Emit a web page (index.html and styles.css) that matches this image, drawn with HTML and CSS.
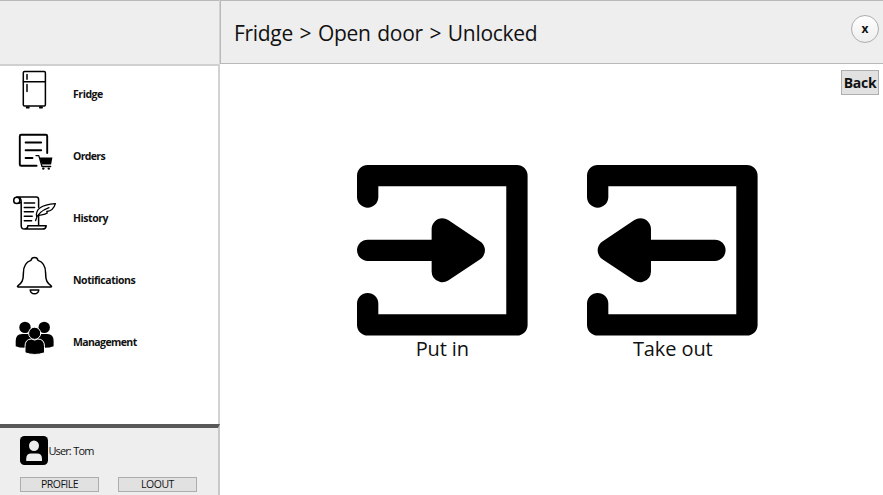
FILE: index.html
```html
<!DOCTYPE html>
<html lang="en">
<head>
<meta charset="utf-8">
<title>Fridge</title>
<link rel="stylesheet" href="styles.css">
</head>
<body>
<div class="app">
  <aside class="sidebar">
    <div class="brand"></div>
    <nav class="nav">
      <a class="item">
        <svg class="icon" viewBox="0 66 60 56">
          <rect x="23.3" y="71.6" width="22.1" height="34.4" rx="1.2"/>
          <path d="M23.3 81.8H45.4M27 74.5V79.3M27 84.6V91.4"/>
          <path class="thick" d="M27 107.4H28.5M40.2 107.4H41.7"/>
        </svg>
        <span class="label">Fridge</span>
      </a>
      <a class="item">
        <svg class="icon" viewBox="0 128 60 56">
          <path class="mid" d="M47.2 153V136.2Q47.2 134.8 45.8 134.8H21.2Q19.8 134.8 19.8 136.2V164.4Q19.8 165.8 21.2 165.8H36.6M25.6 142.5H41.2M25.6 150.3H41.2M25.6 158H32.5"/>
          <path class="fill" d="M39.5 157.6H52.4L51.1 164.6H41.8Z"/>
          <path class="thin" d="M36 155.6H38.8L42 166.5H50.7"/>
          <circle class="fill" cx="43.3" cy="168.6" r="1.2"/><circle class="fill" cx="48.8" cy="168.6" r="1.2"/>
        </svg>
        <span class="label orders">Orders</span>
      </a>
      <a class="item">
        <svg class="icon" viewBox="0 190 60 56">
          <circle cx="16.8" cy="200.4" r="3.1"/>
          <path d="M16.8 197.1H36.3Q38.6 197.1 38.6 199.5V207.3M38.6 215.5V225.5M17 197.1Q21.2 197.1 21.2 202V225.5Q21.2 229.1 24.5 229.1H42.6Q45.8 229 46.2 225.8H27.8Q27.8 229 24.5 229.1M18.5 203.2L21 202.5"/>
          <path d="M24.3 203H34.6M24.3 207.4H34.6M24.3 211.8H33.4M24.3 216.3H32.2M24.3 220.7H31.6"/>
          <path class="thin" d="M35.6 220.5C37 214 41 210.5 49 207.6M36.6 216.5C35.4 209 41 204.8 55.4 203.6C53.6 210 48.5 211.3 46.8 211.5L47.3 213C43.8 215.7 39.7 214 36.6 216.5"/>
        </svg>
        <span class="label">History</span>
      </a>
      <a class="item">
        <svg class="icon" viewBox="0 252 60 56">
          <path d="M31 260.4Q31.6 257.5 34.5 257.5T38 260.4C43.5 262.2 45.6 267 45.6 273C45.6 280.5 47 283 51.2 285.8Q52 287 50.7 287H18.3Q17 287 17.8 285.8C22 283 23.4 280.5 23.4 273C23.4 267 25.5 262.2 31 260.4Z"/>
          <path d="M30.2 290H38.8Q38.3 293.8 34.5 293.8T30.2 290Z"/>
        </svg>
        <span class="label">Notifications</span>
      </a>
      <a class="item">
        <svg class="icon" viewBox="0 314 60 56">
          <g class="fill">
            <circle cx="25" cy="327.4" r="5.7"/><circle cx="44.2" cy="327.4" r="5.7"/>
            <path d="M15.7 346.3V341Q15.7 334 22 334H47.3Q53.6 334 53.6 341V346.3Q50 347.8 44.5 347.8H24.8Q19.3 347.8 15.7 346.3Z"/>
          </g>
          <g class="cutout">
            <circle cx="34.7" cy="333.3" r="6.1"/>
            <path d="M25 352.8V346.5Q25 339 31.5 339Q34.7 341.2 37.9 339Q44.5 339 44.5 346.5V352.8Q34.7 356.2 25 352.8Z"/>
          </g>
        </svg>
        <span class="label management">Management</span>
      </a>
    </nav>
    <footer class="account">
      <div class="user">
        <svg class="avatar" viewBox="0 0 28 29">
          <rect width="28" height="29" rx="4.5"/>
          <ellipse cx="14" cy="9.8" rx="5" ry="5.3" fill="#eee"/>
          <path d="M6.2 25V22.8Q6.2 17.6 11.2 17.6H17Q22 17.6 22 22.8V25Z" fill="#eee"/>
        </svg>
        <span class="name">User: Tom</span>
      </div>
      <div class="actions">
        <button class="small">PROFILE</button>
        <button class="small">LOOUT</button>
      </div>
    </footer>
  </aside>
  <main class="main">
    <header class="top">
      <h1 class="crumbs">Fridge &gt; Open door &gt; Unlocked</h1>
      <button class="close">x</button>
    </header>
    <div class="toolbar"><button class="back">Back</button></div>
    <section class="choices">
      <div class="choice">
        <svg class="door" viewBox="0 0 16 16"><path d="M1 3V1H15V15H1V13M1 8H8"/><path class="solid" d="M8 6L11 8L8 10Z"/></svg>
        <span class="caption">Put in</span>
      </div>
      <div class="choice">
        <svg class="door" viewBox="0 0 16 16"><path d="M1 3V1H15V15H1V13M5 8H12"/><path class="solid" d="M5 6L2 8L5 10Z"/></svg>
        <span class="caption">Take out</span>
      </div>
    </section>
  </main>
</div>
</body>
</html>
```
FILE: styles.css
```css
* { box-sizing: border-box; }
body { margin: 0; background: #fff; color: #111; font-family: "Open Sans", "Noto Sans", sans-serif; }
.app { display: flex; width: 883px; height: 495px; overflow: hidden; }
.sidebar { display: flex; flex-direction: column; width: 220px; border-right: 2px solid #d2d2d2; }
.brand { height: 66px; flex: none; margin-right: -1px; background: #eee; border-top: 1px solid #b9b9b9; border-bottom: 2px solid #d0d0d0; }
.nav { flex: 1; }
.item { display: flex; align-items: center; height: 62px; padding-bottom: 6px; }
.icon { width: 60px; height: 56px; margin-right: 13px; flex: none; fill: none; stroke: #000; stroke-width: 1.5; stroke-linecap: round; stroke-linejoin: round; }
.thick { stroke-width: 2.4; }
.mid { stroke-width: 1.9; }
.thin { stroke-width: 1.3; }
.fill { fill: #000; stroke: none; }
.cutout { fill: #000; stroke: #fff; stroke-width: 1; }
.label { font-size: 10.5px; font-weight: 700; line-height: 16px; letter-spacing: -0.45px; white-space: nowrap; }
.orders { letter-spacing: -0.65px; }
.management { letter-spacing: -0.6px; }
.account { height: 71px; flex: none; margin-right: -2px; background: #eee; border-top: 4px solid #595959; border-right: 2px solid #c9c9c9; }
.user { display: flex; align-items: center; height: 29px; margin: 8px 0 0 20px; }
.avatar { width: 28px; height: 29px; }
.name { margin-left: 0.5px; font-size: 11px; letter-spacing: -0.9px; word-spacing: 0.5px; white-space: nowrap; }
.actions { display: flex; gap: 19px; margin: 12px 0 0 20px; }
button { margin: 0; padding: 0; font-family: inherit; color: #111; border: 1px solid #adadad; background: #e1e1e1; }
.small { width: 79px; height: 15px; font-size: 10.5px; line-height: 13px; letter-spacing: -0.5px; }
.main { flex: 1; display: flex; flex-direction: column; }
.top { display: flex; justify-content: space-between; align-items: flex-start; height: 64px; flex: none; padding-right: 4px; background: #eee; border: solid #b9b9b9; border-width: 1px 0 1px 1px; }
.crumbs { margin: 16px 0 0 13px; font-size: 21px; line-height: 32px; font-weight: 400; letter-spacing: -0.3px; word-spacing: 1.5px; white-space: nowrap; }
.close { width: 28px; height: 28px; margin-top: 14px; border-radius: 50%; background: linear-gradient(#fff, #eee); font-size: 12px; font-weight: 700; line-height: 24px; }
.toolbar { display: flex; justify-content: flex-end; padding: 6px 4px 0 0; }
.back { width: 38px; height: 25px; font-size: 14px; font-weight: 700; line-height: 24px; letter-spacing: -0.3px; }
.choices { display: flex; gap: 59.9px; margin: 70px 0 0 137px; }
.choice { display: flex; flex-direction: column; align-items: center; width: 170.6px; }
.door { width: 170.6px; height: 170.6px; fill: none; stroke: #000; stroke-width: 2; stroke-linecap: round; stroke-linejoin: round; overflow: visible; }
.solid { fill: #000; }
.caption { margin-top: -1px; font-size: 20px; line-height: 28px; letter-spacing: -0.1px; white-space: nowrap; }
```
